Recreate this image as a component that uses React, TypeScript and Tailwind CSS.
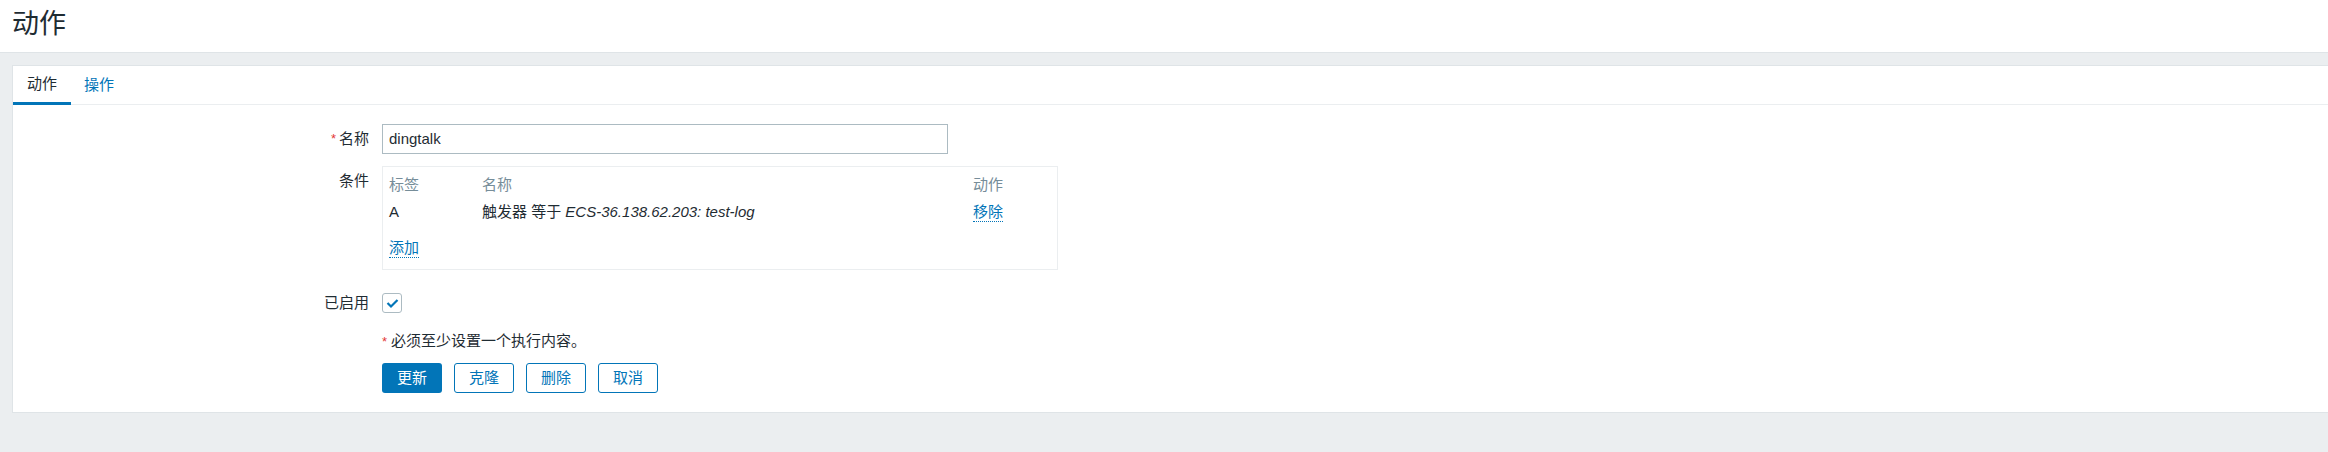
import React from "react";

const font = {
  fontFamily: '"Liberation Sans", Arial, "Noto Sans CJK SC", sans-serif',
};

const ActionForm = () => {
  return (
    <div className="h-[452px] overflow-hidden bg-[#ebeef0] text-[15px] text-[#1f2c33]" style={font}>
      <div className="h-[53px] bg-white border-b border-[#dfe4e7] flex items-center px-[12px]">
        <h1 className="text-[27px] leading-[30px] font-normal -mt-[4px]">动作</h1>
      </div>

      <div className="ml-[12px] mt-[12px] bg-white border border-r-0 border-[#dfe4e7]">
        {/* tabs */}
        <div className="flex h-[39px] border-b border-[#ebeef0]">
          <div className="px-[14px] flex items-center border-b-[3px] border-[#0275b8] mb-[-1px] text-[#1f2c33]">
            动作
          </div>
          <div className="px-[13px] flex items-center text-[#0275b8]">操作</div>
        </div>

        <div className="pt-[19px] pb-[19px]">
          <div className="grid grid-cols-[356px_1fr] gap-x-[13px]">
            {/* name */}
            <div className="h-[30px] flex items-center justify-end">
              <span className="text-[#e33734] mr-[3px] text-[13px]">*</span>
              名称
            </div>
            <div className="h-[30px]">
              <div className="w-[566px] h-[30px] border border-[#acbbc2] px-[6px] flex items-center">
                dingtalk
              </div>
            </div>

            {/* conditions */}
            <div className="mt-[12px] h-[30px] flex items-center justify-end">条件</div>
            <div className="mt-[12px]">
              <div className="w-[676px] h-[104px] border border-[#ebeef0] pl-[6px] pt-[5px]">
                <div className="flex h-[27px] items-center text-[#768d99]">
                  <div className="w-[93px]">标签</div>
                  <div className="w-[491px]">名称</div>
                  <div>动作</div>
                </div>
                <div className="flex h-[27px] items-center">
                  <div className="w-[93px]">A</div>
                  <div className="w-[491px]">
                    触发器 等于 <i>ECS-36.138.62.203: test-log</i>
                  </div>
                  <div>
                    <span className="inline-block leading-[18px] text-[#0275b8] border-b border-dotted border-[#0275b8]">
                      移除
                    </span>
                  </div>
                </div>
                <div className="mt-[11px]">
                  <span className="inline-block leading-[18px] text-[#0275b8] border-b border-dotted border-[#0275b8]">
                    添加
                  </span>
                </div>
              </div>
            </div>

            {/* enabled */}
            <div className="mt-[18px] h-[30px] flex items-center justify-end">已启用</div>
            <div className="mt-[18px] h-[30px] flex items-center">
              <div className="w-[20px] h-[20px] border border-[#acbbc2] rounded-[3px] flex items-center justify-center">
                <svg width="13" height="11" viewBox="0 0 13 11">
                  <polyline
                    points="1.5,5 5,8.5 11.5,2"
                    fill="none"
                    stroke="#0275b8"
                    strokeWidth="2.2"
                  />
                </svg>
              </div>
            </div>

            {/* note */}
            <div />
            <div className="mt-[14px] h-[18px] leading-[18px]">
              <span className="text-[#e33734] text-[13px] mr-[4px]">*</span>
              必须至少设置一个执行内容。
            </div>

            {/* buttons */}
            <div />
            <div className="mt-[13px] flex gap-[12px]">
              <button className="w-[60px] h-[30px] rounded-[3px] bg-[#0275b8] text-white">更新</button>
              <button className="w-[60px] h-[30px] rounded-[3px] border border-[#0275b8] text-[#0275b8] bg-white">
                克隆
              </button>
              <button className="w-[60px] h-[30px] rounded-[3px] border border-[#0275b8] text-[#0275b8] bg-white">
                删除
              </button>
              <button className="w-[60px] h-[30px] rounded-[3px] border border-[#0275b8] text-[#0275b8] bg-white">
                取消
              </button>
            </div>
          </div>
        </div>
      </div>
    </div>
  );
};

export default function App() {
  return <ActionForm />;
}
